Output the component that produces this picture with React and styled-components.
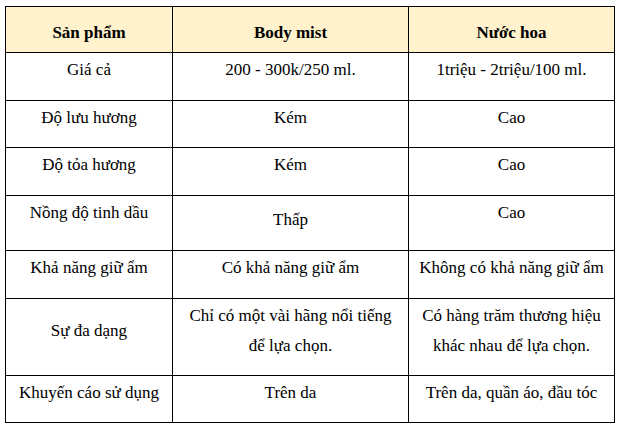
import React from "react";
import styled, { createGlobalStyle } from "styled-components";

const Global = createGlobalStyle`
  html, body { margin: 0; padding: 0; background: #ffffff; }
  body { font-family: "Liberation Serif", Tinos, "Times New Roman", serif; color: #000; }
`;

const Page = styled.div`
  padding: 6px 0 0 5px;
`;

const Table = styled.table`
  border-collapse: collapse;
  table-layout: fixed;
  width: 609px;
  font-family: "Liberation Serif", Tinos, "Times New Roman", serif;
  font-size: 17px;
  line-height: 30px;
  color: #000;
`;

const Row = styled.tr`
  & > td,
  & > th {
    padding-bottom: ${(p) => p.$pb}px;
  }
`;

const Th = styled.th`
  border: 1px solid #000;
  background: #fff2cc;
  font-weight: bold;
  text-align: center;
  vertical-align: top;
  padding: 11px 2px 4px;
  white-space: nowrap;
`;

const Td = styled.td`
  border: 1px solid #000;
  background: #ffffff;
  text-align: center;
  vertical-align: ${(p) => (p.$middle ? "middle" : "top")};
  padding: ${(p) => p.$pt}px 2px 15px;
  white-space: nowrap;
`;

const header = ["Sản phẩm", "Body mist", "Nước hoa"];

const rows = [
  { pb: 15, cells: [["Giá cả"], ["200 - 300k/250 ml."], ["1triệu - 2triệu/100 ml."]] },
  { pb: 14, cells: [["Độ lưu hương"], ["Kém"], ["Cao"]] },
  { pb: 15, cells: [["Độ tỏa hương"], ["Kém"], ["Cao"]] },
  { pb: 15, cells: [["Nồng độ tinh dầu"], ["Thấp"], ["Cao"]] },
  { pb: 15, cells: [["Khả năng giữ ẩm"], ["Có khả năng giữ ẩm"], ["Không có khả năng giữ ẩm"]] },
  {
    pb: 14,
    cells: [
      ["Sự đa dạng"],
      ["Chỉ có một vài hãng nổi tiếng", "để lựa chọn."],
      ["Có hàng trăm thương hiệu", "khác nhau để lựa chọn."],
    ],
  },
  { pb: 14, cells: [["Khuyến cáo sử dụng"], ["Trên da"], ["Trên da, quần áo, đầu tóc"]] },
];

export default function App() {
  return (
    <>
      <Global />
      <Page>
        <Table>
          <colgroup>
            <col style={{ width: 167 }} />
            <col style={{ width: 236 }} />
            <col style={{ width: 206 }} />
          </colgroup>
          <thead>
            <Row $pb={4}>
              {header.map((h) => (
                <Th key={h}>{h}</Th>
              ))}
            </Row>
          </thead>
          <tbody>
            {rows.map((row, ri) => (
              <Row key={ri} $pb={row.pb}>
                {row.cells.map((cell, ci) => (
                  <Td
                    key={ci}
                    $pt={cell[0] === "Thấp" ? 9 : 2}
                    $middle={ri === 5 && ci === 0}
                  >
                    {cell.map((l, i) => (
                      <React.Fragment key={l}>
                        {i > 0 && <br />}
                        {l}
                      </React.Fragment>
                    ))}
                  </Td>
                ))}
              </Row>
            ))}
          </tbody>
        </Table>
      </Page>
    </>
  );
}
